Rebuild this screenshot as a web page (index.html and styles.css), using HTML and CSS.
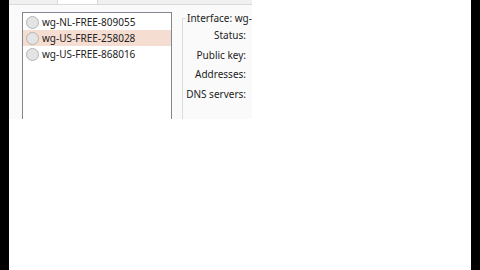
FILE: index.html
```html
<!DOCTYPE html>
<html lang="en">
<head>
  <meta charset="UTF-8">
  <title>WireGuard</title>
  <link rel="stylesheet" href="styles.css">
</head>
<body>
  <div class="frame">
    <div class="bar"></div>
    <div class="screen">
      <div class="window">
        <div class="tabs">
          <div class="tab-gap"></div>
          <div class="tab"></div>
        </div>
        <div class="content">
          <div class="listbox">
            <div class="item"><span class="radio"></span>wg-NL-FREE-809055</div>
            <div class="item selected"><span class="radio"></span>wg-US-FREE-258028</div>
            <div class="item"><span class="radio"></span>wg-US-FREE-868016</div>
          </div>
          <fieldset class="group">
            <legend>Interface: wg-</legend>
            <div class="row">Status:</div>
            <div class="row">Public key:</div>
            <div class="row">Addresses:</div>
            <div class="row">DNS servers:</div>
          </fieldset>
        </div>
      </div>
    </div>
    <div class="bar"></div>
  </div>
</body>
</html>
```

FILE: styles.css
```css
body { margin: 0; background: #000; font-family: "Noto Sans", "Open Sans", sans-serif; font-size: 10px; color: #222; }
.frame { display: flex; height: 270px; }
.bar { width: 9px; background: #000; }
.screen { flex: 1; background: #fff; }
.window { width: 243px; height: 119px; overflow: hidden; background: #fafafa; }
.tabs { display: flex; height: 4px; background: #f0f0f0; border-bottom: 1px solid #d9d9d9; }
.tab-gap { width: 48px; }
.tab { width: 39px; background: #fff; border-left: 1px solid #d9d9d9; border-right: 1px solid #d9d9d9; }
.content { display: flex; align-items: flex-start; padding-left: 13px; }
.listbox { width: 148px; height: 120px; margin-top: 7px; padding-top: 1px; border: 1px solid #828790; background: #fff; flex-shrink: 0; }
.item { display: flex; align-items: center; height: 16px; padding-left: 3px; white-space: nowrap; }
.item.selected { background: #f6ddd1; }
.radio { width: 13px; height: 13px; border-radius: 50%; border: 1px solid #b4b4b4; background: #e4e4e4; margin-right: 3px; box-sizing: border-box; flex-shrink: 0; }
.group { margin: 6px 0 0 10px; padding: 0; border: 1px solid #dcdcdc; min-width: 200px; height: 120px; flex-shrink: 0; }
.group legend { padding: 0 1px; margin-left: 3px; line-height: 15px; white-space: nowrap; }
.row { width: 63px; text-align: right; line-height: 19.5px; white-space: nowrap; }
```
